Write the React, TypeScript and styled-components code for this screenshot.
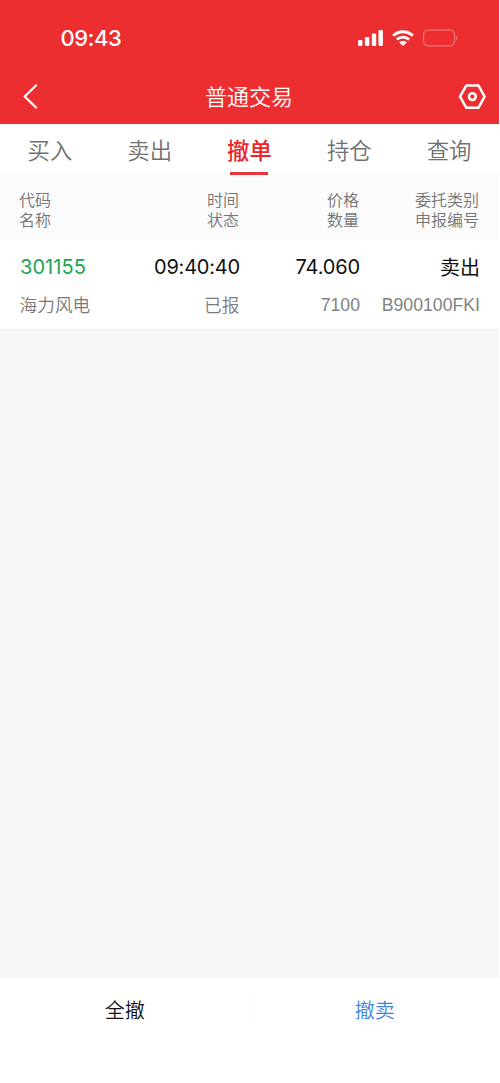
import React from "react";
import styled, { createGlobalStyle } from "styled-components";

const GlobalStyle = createGlobalStyle`
  * { box-sizing: border-box; }
  html, body { margin: 0; padding: 0; background: #fff; }
  body { font-family: Inter, "Noto Sans CJK SC", sans-serif; }
  button { border: 0; padding: 0; background: none; font: inherit; color: inherit; }
`;

const Screen = styled.div`
  width: 499px;
  height: 1083px;
  display: flex;
  flex-direction: column;
  background: #f7f7f7;
`;

const Top = styled.header`
  height: 124px;
  flex: none;
  background: #ed2e31;
  color: #fff;
`;

const StatusBar = styled.div`
  height: 70px;
  padding: 5px 41px 0 60.5px;
  display: flex;
  align-items: center;
  justify-content: space-between;
`;

const Clock = styled.span`
  font-size: 22px;
  font-weight: 550;
  line-height: 28px;
  letter-spacing: -0.4px;
`;

const NavBar = styled.div`
  height: 54px;
  padding: 0 13px 0 22px;
  display: grid;
  grid-template-columns: 28px 1fr 28px;
  align-items: center;
`;

const IconButton = styled.button`
  height: 28px;
  display: flex;
  align-items: center;
`;

const Title = styled.h1`
  margin: 0;
  padding-right: 10px;
  text-align: center;
  font-size: 22px;
  font-weight: 350;
  line-height: 32px;
`;

const Tabs = styled.nav`
  height: 51px;
  flex: none;
  display: grid;
  grid-template-columns: repeat(5, 1fr);
  background: #fff;
  border-bottom: 1px solid #f7f7f7;
`;

const Tab = styled.button<{ $active?: boolean }>`
  height: 51px;
  display: flex;
  flex-direction: column;
  align-items: center;
  justify-content: space-between;
  padding-top: 9px;
  font-size: 22.4px;
  line-height: 35px;
  font-weight: ${(p) => (p.$active ? 500 : 350)};
  color: ${(p) => (p.$active ? "#ed2529" : "#707070")};

  &::after {
    content: "";
    width: 38px;
    height: 3px;
    background: ${(p) => (p.$active ? "#e4383c" : "transparent")};
  }
`;

const Columns = styled.div`
  display: grid;
  grid-template-columns: 110px 110px 120px 120px;
  padding: 0 19px 0 20px;
`;

const TableHead = styled(Columns)`
  height: 65px;
  flex: none;
  align-content: center;
  padding: 5px 20px 0 19px;
  background: #fbfbfb;
  color: #747474;
  font-size: 16px;
  font-weight: 350;
  line-height: 20px;
`;

const Order = styled(Columns)`
  height: 90px;
  flex: none;
  align-content: start;
  padding-top: 11px;
  background: #fff;
  border-bottom: 1px solid #f1f1f1;
`;

const Cell = styled.div<{ $left?: boolean }>`
  text-align: ${(p) => (p.$left ? "left" : "right")};
  white-space: nowrap;
`;

const Primary = styled.div<{ $color?: string; $spacing?: number; $offset?: number }>`
  height: 32px;
  padding-top: ${(p) => p.$offset ?? 0}px;
  line-height: 32px;
  font-size: 20px;
  font-weight: 380;
  letter-spacing: ${(p) => p.$spacing ?? 0}px;
  font-feature-settings: "calt" 0;
  color: ${(p) => p.$color ?? "#111"};
`;

const Secondary = styled.div<{ $latin?: boolean }>`
  margin: ${(p) => (p.$latin ? "7px 0 0" : "8px 0.5px 0 -0.5px")};
  height: 30px;
  line-height: 30px;
  font-family: "Liberation Sans", "Noto Sans CJK SC", sans-serif;
  font-size: 17.7px;
  font-weight: 350;
  color: ${(p) => (p.$latin ? "#828282" : "#7a7a7a")};
`;

const Empty = styled.main`
  flex: 1;
`;

const Footer = styled.footer`
  height: 105px;
  flex: none;
  display: grid;
  grid-template-columns: 1fr 1fr;
  align-content: start;
  align-items: center;
  padding-top: 18px;
  background: #fff;
`;

const Action = styled.button<{ $color: string }>`
  height: 28px;
  padding-top: 2px;
  line-height: 27px;
  font-size: 20px;
  font-weight: 350;
  color: ${(p) => p.$color};

  & + & { border-left: 1px solid #f7f7f7; }
`;

const StatusIcons = () => (
  <svg width="100" height="20" viewBox="0 0 100 20" fill="none">
    <g fill="#fff">
      <rect x="0" y="12" width="4.4" height="6" rx="1.2" />
      <rect x="6.9" y="9" width="4.4" height="9" rx="1.2" />
      <rect x="13.8" y="5.5" width="4.4" height="12.5" rx="1.2" />
      <rect x="20.5" y="2" width="4.4" height="16" rx="1.2" />
      <path d="M45 13.1c1.4 0 2.7.5 3.7 1.3L45 18.1l-3.7-3.7c1-.8 2.3-1.3 3.7-1.3z" />
    </g>
    <path d="M35.2 7.7a14.2 14.2 0 0 1 19.6 0M38.9 11.5a9 9 0 0 1 12.2 0" stroke="#fff" strokeWidth="2.9" />
    <rect x="65.6" y="2.1" width="31" height="15.8" rx="4.8" stroke="#f57577" strokeWidth="1.2" />
    <path d="M98.2 7.7c1.4.6 1.4 4 0 4.6z" fill="#f57577" />
  </svg>
);

const BackIcon = () => (
  <svg width="18" height="26" viewBox="0 0 18 26" fill="none" stroke="#fff" strokeWidth="2.3" strokeLinecap="round" strokeLinejoin="round">
    <path d="M14 1.5L2.7 12.5L14 23.5" />
  </svg>
);

const SettingsIcon = () => (
  <svg width="28" height="26" viewBox="0 0 28 26" fill="none" stroke="#fff" strokeWidth="2.5" strokeLinejoin="round">
    <path d="M8.4 1.4H20.4L26.6 12.6L20.4 23.8H8.4L2 12.6Z" />
    <circle cx="14.4" cy="12.6" r="3.4" />
  </svg>
);

const tabs = ["买入", "卖出", "撤单", "持仓", "查询"];
const headings = [
  ["代码", "名称"],
  ["时间", "状态"],
  ["价格", "数量"],
  ["委托类别", "申报编号"],
];
const order = [
  { main: "301155", sub: "海力风电", color: "#18a653", spacing: 0.05 },
  { main: "09:40:40", sub: "已报", spacing: -0.2 },
  { main: "74.060", sub: "7100", spacing: -0.15, latin: true },
  { main: "卖出", sub: "B900100FKI", offset: 1, latin: true },
];

export default function App() {
  return (
    <>
      <GlobalStyle />
      <Screen>
        <Top>
          <StatusBar>
            <Clock>09:43</Clock>
            <StatusIcons />
          </StatusBar>
          <NavBar>
            <IconButton aria-label="返回"><BackIcon /></IconButton>
            <Title>普通交易</Title>
            <IconButton aria-label="设置"><SettingsIcon /></IconButton>
          </NavBar>
        </Top>
        <Tabs>
          {tabs.map((name) => (
            <Tab key={name} $active={name === "撤单"}>{name}</Tab>
          ))}
        </Tabs>
        <TableHead>
          {headings.map(([first, second], i) => (
            <Cell key={first} $left={i === 0}>
              <div>{first}</div>
              <div>{second}</div>
            </Cell>
          ))}
        </TableHead>
        <Order>
          {order.map((item, i) => (
            <Cell key={item.main} $left={i === 0}>
              <Primary $color={item.color} $spacing={item.spacing} $offset={item.offset}>{item.main}</Primary>
              <Secondary $latin={item.latin}>{item.sub}</Secondary>
            </Cell>
          ))}
        </Order>
        <Empty />
        <Footer>
          <Action $color="#111">全撤</Action>
          <Action $color="#3f86df">撤卖</Action>
        </Footer>
      </Screen>
    </>
  );
}
